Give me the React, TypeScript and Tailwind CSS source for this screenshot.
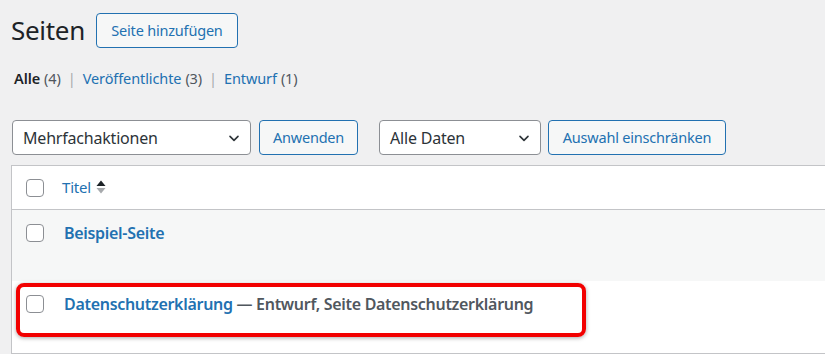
import React from "react";

const Chevron = () => (
  <svg width="16" height="16" viewBox="0 0 20 20" className="shrink-0">
    <path d="M5 8 L10 13 L15 8" fill="none" stroke="#2c3338" strokeWidth="2" strokeLinecap="round" strokeLinejoin="round" />
  </svg>
);

const Checkbox = () => (
  <div className="w-[18px] h-[18px] shrink-0 rounded-[4px] border border-[#8c8f94] bg-white" />
);

export default function App() {
  return (
    <div
      className="relative w-[825px] h-[354px] overflow-hidden bg-[#f0f0f1] text-[#1d2327]"
      style={{ fontFamily: '"Noto Sans", "Open Sans", sans-serif' }}
    >
      <div className="pl-[11px] pt-[13px]">
        <div className="flex items-center h-[35px]">
          <h1 className="text-[26px] leading-[35px] font-normal text-[#1d2327] tracking-[-0.3px]">Seiten</h1>
          <button className="ml-[11px] w-[142px] h-[35px] rounded-[4px] border border-[#2271b1] bg-[#f6f7f7] text-[#2271b1] text-[14.5px] leading-none tracking-[-0.2px]">
            Seite hinzufügen
          </button>
        </div>
        <div className="mt-[21px] h-[20px] flex items-center text-[14.5px] pl-[3px] tracking-[-0.1px]">
          <span className="font-semibold text-[#1d2327]">Alle</span>
          <span className="ml-[4px] text-[#50575e]">(4)</span>
          <span className="mx-[7px] text-[#a7aaad]">|</span>
          <span className="text-[#2271b1]">Veröffentlichte</span>
          <span className="ml-[4px] text-[#50575e]">(3)</span>
          <span className="mx-[7px] text-[#a7aaad]">|</span>
          <span className="text-[#2271b1]">Entwurf</span>
          <span className="ml-[4px] text-[#50575e]">(1)</span>
        </div>
        <div className="mt-[31px] flex items-center h-[35px]">
          <div className="ml-[1px] w-[239px] h-[35px] flex items-center justify-between pl-[10px] pr-[8px] rounded-[4px] border border-[#8c8f94] bg-white text-[16px] tracking-[-0.2px] text-[#2c3338]">
            <span>Mehrfachaktionen</span>
            <Chevron />
          </div>
          <button className="ml-[8px] w-[99px] h-[35px] rounded-[4px] border border-[#2271b1] bg-[#f6f7f7] text-[#2271b1] text-[14.5px] tracking-[-0.2px]">
            Anwenden
          </button>
          <div className="ml-[21px] w-[162px] h-[35px] flex items-center justify-between pl-[10px] pr-[8px] rounded-[4px] border border-[#8c8f94] bg-white text-[16px] tracking-[-0.2px] text-[#2c3338]">
            <span>Alle Daten</span>
            <Chevron />
          </div>
          <button className="ml-[7px] w-[178px] h-[35px] rounded-[4px] border border-[#2271b1] bg-[#f6f7f7] text-[#2271b1] text-[14.5px] tracking-[-0.2px]">
            Auswahl einschränken
          </button>
        </div>
        <div className="mt-[10px] w-[830px] border border-[#c3c4c7] bg-white">
          <div className="h-[44px] flex items-center border-b border-[#c3c4c7] pl-[14px]">
            <Checkbox />
            <span className="ml-[18px] text-[15px] text-[#2271b1] tracking-[-0.2px]">Titel</span>
            <svg width="12" height="18" viewBox="0 0 12 18" className="ml-[4px] -mt-[1px]">
              <path d="M1.5 8 L6 2.5 L10.5 8 Z" fill="#1d2327" />
              <path d="M1.5 10 L6 15.5 L10.5 10 Z" fill="#a7aaad" />
            </svg>
          </div>
          <div className="h-[71px] bg-[#f6f7f7] pl-[14px] pt-[14px]">
            <div className="h-[18px] flex items-center">
              <Checkbox />
              <span className="ml-[20px] text-[16px] font-semibold text-[#2271b1] tracking-[-0.3px]">Beispiel-Seite</span>
            </div>
          </div>
          <div className="h-[72px] bg-white pl-[14px] pt-[14px]">
            <div className="h-[18px] flex items-center">
              <Checkbox />
              <span className="ml-[20px] text-[16px] font-semibold tracking-[-0.3px] whitespace-nowrap">
                <span className="text-[#2271b1]">Datenschutzerklärung</span>
                <span className="text-[#50575e]"> — Entwurf, Seite Datenschutzerklärung</span>
              </span>
            </div>
          </div>
        </div>
      </div>
      <div className="absolute left-[16px] top-[283px] w-[570px] h-[54px] rounded-[8px] border-[4px] border-[#f20000] shadow-[0_1px_4px_rgba(0,0,0,0.35)]" />
    </div>
  );
}
